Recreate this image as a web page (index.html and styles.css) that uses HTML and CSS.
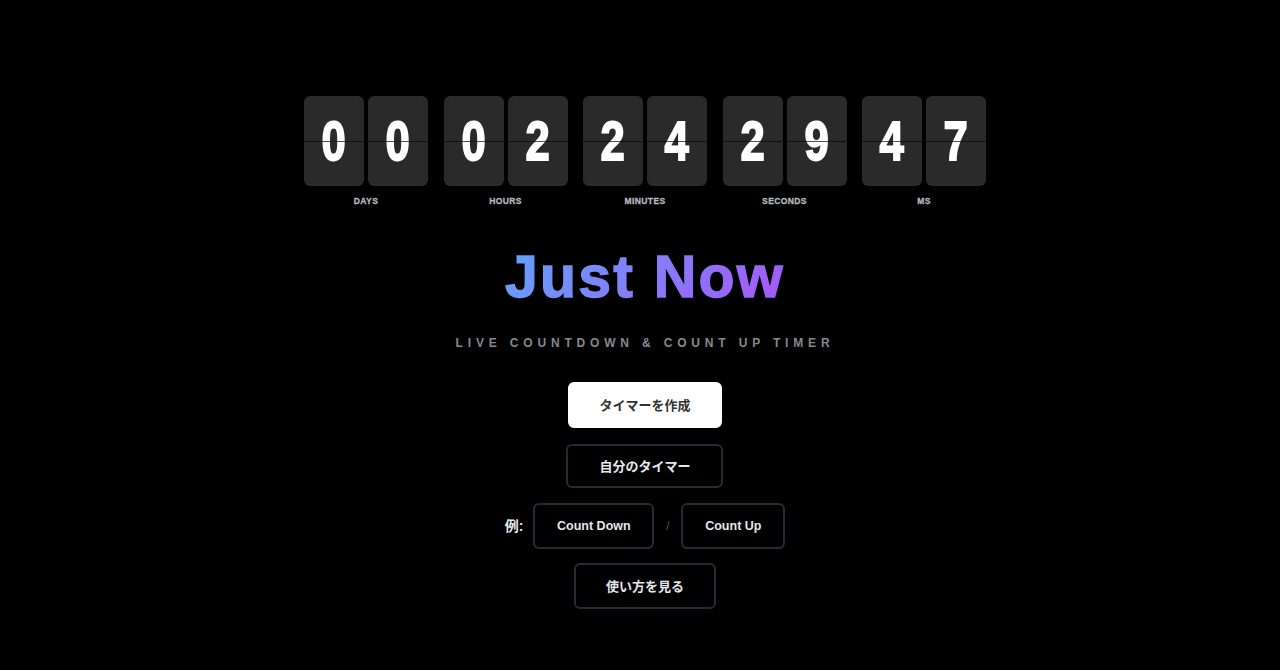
FILE: index.html
```html
<!DOCTYPE html>
<html lang="ja">
<head>
<meta charset="utf-8">
<title>Just Now</title>
<link rel="stylesheet" href="styles.css">
</head>
<body>
<main class="page">
  <div class="clock">
    <div class="group"><div class="cards"><div class="card"><span class="digit">0</span></div><div class="card"><span class="digit">0</span></div></div><div class="label">DAYS</div></div>
    <div class="group"><div class="cards"><div class="card"><span class="digit">0</span></div><div class="card"><span class="digit">2</span></div></div><div class="label">HOURS</div></div>
    <div class="group"><div class="cards"><div class="card"><span class="digit">2</span></div><div class="card"><span class="digit">4</span></div></div><div class="label">MINUTES</div></div>
    <div class="group"><div class="cards"><div class="card"><span class="digit">2</span></div><div class="card"><span class="digit">9</span></div></div><div class="label">SECONDS</div></div>
    <div class="group"><div class="cards"><div class="card"><span class="digit">4</span></div><div class="card"><span class="digit">7</span></div></div><div class="label">MS</div></div>
  </div>
  <h1 class="title">Just Now</h1>
  <p class="subtitle">LIVE COUNTDOWN &amp; COUNT UP TIMER</p>
  <div class="actions">
    <a class="btn btn-primary cjk">タイマーを作成</a>
    <a class="btn btn-mine cjk">自分のタイマー</a>
    <div class="examples">
      <span class="ex-label">例:</span>
      <a class="btn btn-down">Count Down</a>
      <span class="slash">/</span>
      <a class="btn btn-up">Count Up</a>
    </div>
    <a class="btn btn-how cjk">使い方を見る</a>
  </div>
</main>
</body>
</html>
```
FILE: styles.css
```css
* { box-sizing: border-box; }
html, body { margin: 0; height: 100%; background: #000; overflow: hidden; }
body { font-family: "Liberation Sans", "Noto Sans CJK JP", sans-serif; color: #e5e7eb; }
.page { width: 1280px; height: 670px; padding: 96px 0 0 10px; display: flex; flex-direction: column; align-items: center; }
.clock { display: flex; gap: 15.5px; }
.group { width: 124px; display: flex; flex-direction: column; align-items: center; }
.cards { display: flex; gap: 4px; }
.card { position: relative; width: 60px; height: 90px; border-radius: 6px; background: #2a2a2a; color: #fff; font-weight: 700; font-size: 56px; line-height: 90px; text-align: center; }
.card::after { content: ""; position: absolute; left: 0; right: 0; top: 45px; height: 1px; background: rgba(10,10,10,.7); }
.digit { display: inline-block; transform: scaleX(.78); -webkit-text-stroke: 1.8px #fff; }
.label { margin-top: 10px; font-size: 8.5px; line-height: 11px; font-weight: 700; letter-spacing: .4px; color: #b4b8bf; -webkit-text-stroke: .3px #b4b8bf; }
.title { margin: 35px 0 0; font-size: 59px; line-height: 70px; font-weight: 700; letter-spacing: 2.2px; -webkit-text-stroke: 1.4px transparent; background: linear-gradient(135deg, #60a5fa, #a855f7); -webkit-background-clip: text; background-clip: text; color: transparent; }
.subtitle { margin: 23px 0 0; font-size: 12px; font-weight: 700; line-height: 16px; letter-spacing: 4.83px; color: #85888d; }
.actions { margin-top: 31px; display: flex; flex-direction: column; align-items: center; }
.btn { display: flex; align-items: center; justify-content: center; height: 46px; border-radius: 6px; border: 2px solid #262a35; font-size: 13px; font-weight: 700; color: #e5e7eb; }
.cjk { padding-bottom: 2px; }
.btn-primary { width: 154px; background: #fff; border-color: #fff; color: #333; }
.btn-mine { width: 157px; height: 44px; margin-top: 16px; }
.examples { display: flex; align-items: center; margin-top: 15px; }
.ex-label { font-size: 14px; font-weight: 700; margin-right: 10px; padding-bottom: 2px; }
.btn-down { width: 121px; font-size: 12.5px; }
.slash { width: 27px; text-align: center; font-size: 12px; color: #555; }
.btn-up { width: 104px; font-size: 12.5px; }
.btn-how { width: 142px; margin-top: 14px; }
```
